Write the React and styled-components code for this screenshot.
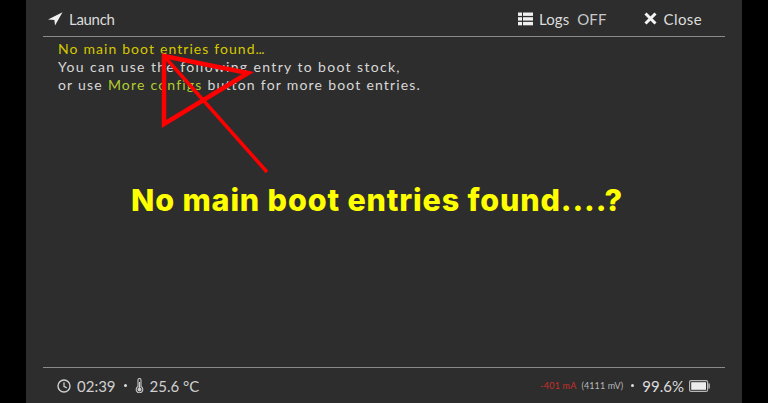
import React from 'react';
import styled, { createGlobalStyle } from 'styled-components';

const GlobalStyle = createGlobalStyle`
  html, body {
    margin: 0;
    padding: 0;
    height: 100%;
    background: #000;
    overflow: hidden;
  }
`;

const Screen = styled.div`
  width: 768px;
  height: 403px;
  display: flex;
  justify-content: center;
  background: #000;
`;

const Panel = styled.div`
  position: relative;
  width: 716px;
  height: 403px;
  box-sizing: border-box;
  padding: 0 17px;
  display: flex;
  flex-direction: column;
  background: #2d2d2d;
  font-family: "Lato", "Open Sans", sans-serif;
  color: #e0e0e0;
`;

const TopBar = styled.header`
  height: 37px;
  box-sizing: border-box;
  flex: none;
  display: flex;
  align-items: center;
  justify-content: space-between;
  padding: 1px 23px 0 5px;
  border-bottom: 1px solid #8a8a8a;
`;

const TopGroup = styled.div`
  display: flex;
  align-items: center;
  gap: ${(p) => p.$gap || 0}px;
`;

const TopItem = styled.div`
  display: flex;
  align-items: center;
  gap: ${(p) => p.$gap || 7}px;
  font-size: 15px;
  letter-spacing: ${(p) => p.$spacing || 0.1}px;
  color: #dcdcdc;
`;

const Off = styled.span`
  margin-left: 8px;
  color: #c8c8c8;
`;

const Message = styled.div`
  flex: 1;
  padding: 3px 0 0 15px;
  font-size: 14px;
  line-height: 18px;
  word-spacing: 0.3px;
  color: #d8d8d8;
`;

const Line = styled.div`
  white-space: nowrap;
  letter-spacing: ${(p) => p.$spacing}px;
  color: ${(p) => p.$color || 'inherit'};
`;

const Dots = styled.span`
  letter-spacing: -0.5px;
`;

const Accent = styled.span`
  color: #b3cc2e;
`;

const BottomBar = styled.footer`
  height: 36px;
  box-sizing: border-box;
  flex: none;
  display: flex;
  align-items: center;
  justify-content: space-between;
  padding: 0 15px 0 14px;
  border-top: 1px solid #8a8a8a;
`;

const Status = styled.div`
  display: flex;
  align-items: center;
  gap: ${(p) => p.$gap || 6}px;
  font-size: 15px;
  letter-spacing: 0;
  color: #d0d0d0;
`;

const Dot = styled.span`
  width: 3px;
  height: 3px;
  margin: 0 ${(p) => p.$space || 2}px;
  background: #dcdcdc;
  border-radius: 50%;
`;

const Current = styled.span`
  font-size: 9px;
  letter-spacing: 0.2px;
  color: #c8302c;
`;

const Voltage = styled.span`
  font-size: 9px;
  letter-spacing: 0.1px;
  color: #b8b8b8;
`;

const Percent = styled.span`
  color: #dcdcdc;
`;

const Markup = styled.svg`
  position: absolute;
  left: -26px;
  top: 0;
  pointer-events: none;
`;

const Caption = styled.div`
  position: absolute;
  left: 105px;
  top: 182px;
  font-family: "Inter", "Liberation Sans", sans-serif;
  font-size: 30.5px;
  line-height: 36px;
  font-weight: 800;
  letter-spacing: 0.85px;
  white-space: nowrap;
  color: #ffff00;
`;

const LaunchIcon = () => (
  <svg width="15" height="14" viewBox="0 0 15 14">
    <path d="M14.5 0.3 L0 7.6 L6.4 8 L7 13.6 Z" fill="#f0f0f0" />
  </svg>
);

const LogsIcon = () => (
  <svg width="15" height="14" viewBox="0 0 15 14" fill="#f0f0f0">
    <rect x="0" y="0.5" width="4" height="3.4" />
    <rect x="5" y="0.5" width="10" height="3.4" />
    <rect x="0" y="5.2" width="4" height="3.4" />
    <rect x="5" y="5.2" width="10" height="3.4" />
    <rect x="0" y="9.9" width="4" height="3.4" />
    <rect x="5" y="9.9" width="10" height="3.4" />
  </svg>
);

const CloseIcon = () => (
  <svg width="13" height="13" viewBox="0 0 13 13">
    <path d="M1.5 1.5 L11.5 11.5 M11.5 1.5 L1.5 11.5" stroke="#f4f4f4" strokeWidth="3" />
  </svg>
);

const ClockIcon = () => (
  <svg width="14" height="14" viewBox="0 0 14 14" fill="none" stroke="#d0d0d0">
    <circle cx="7" cy="7" r="6" strokeWidth="1.4" />
    <path d="M7 3.2 V7.3 L9.8 9" strokeWidth="1.3" />
  </svg>
);

const ThermometerIcon = () => (
  <svg width="9" height="15" viewBox="0 0 9 15" fill="none">
    <path d="M3 2 a1.5 1.5 0 0 1 3 0 V8.6 a3.3 3.3 0 1 1 -3 0 Z" stroke="#c8c8c8" strokeWidth="1.1" />
    <circle cx="4.5" cy="11.4" r="2" fill="#c8c8c8" />
    <rect x="3.9" y="4" width="1.2" height="7" fill="#c8c8c8" />
  </svg>
);

const BatteryIcon = () => (
  <svg width="21" height="12" viewBox="0 0 21 12">
    <rect x="0.6" y="0.6" width="18" height="10.8" rx="1.5" fill="none" stroke="#b8b8b8" strokeWidth="1.2" />
    <rect x="2.2" y="2.2" width="14.8" height="7.6" fill="#ececec" />
    <rect x="19.4" y="3.5" width="1.4" height="5" fill="#b8b8b8" />
  </svg>
);

const App = () => {
  return (
    <Screen>
      <GlobalStyle />
      <Panel>
        <TopBar>
          <TopItem $gap={6} $spacing={-0.3}>
            <LaunchIcon />
            Launch
          </TopItem>
          <TopGroup $gap={37}>
            <TopItem $gap={6}>
              <LogsIcon />
              <span>Logs<Off>OFF</Off></span>
            </TopItem>
            <TopItem $spacing={0.4}>
              <CloseIcon />
              Close
            </TopItem>
          </TopGroup>
        </TopBar>

        <Message>
          <Line $color="#d6c800" $spacing={1.05}>No main boot entries found<Dots>...</Dots></Line>
          <Line $spacing={1.3}>You can use the following entry to boot stock,</Line>
          <Line $spacing={1.16}>or use <Accent>More configs</Accent> button for more boot entries.</Line>
        </Message>

        <BottomBar>
          <Status>
            <ClockIcon />
            02:39
            <Dot />
            <ThermometerIcon />
            25.6 °C
          </Status>
          <Status $gap={5}>
            <Current>-401 mA</Current>
            <Voltage>(4111 mV)</Voltage>
            <Dot $space={3} />
            <Percent>99.6%</Percent>
            <BatteryIcon />
          </Status>
        </BottomBar>

        <Markup width="768" height="403" viewBox="0 0 768 403" fill="none" stroke="#ff0000">
          <path d="M164 56 L248 73 L164 124 Z" strokeWidth="4.5" strokeLinejoin="miter" />
          <path d="M164 56 L267 172" strokeWidth="3.5" />
        </Markup>
        <Caption>No main boot entries found....?</Caption>
      </Panel>
    </Screen>
  );
};

export default App;
